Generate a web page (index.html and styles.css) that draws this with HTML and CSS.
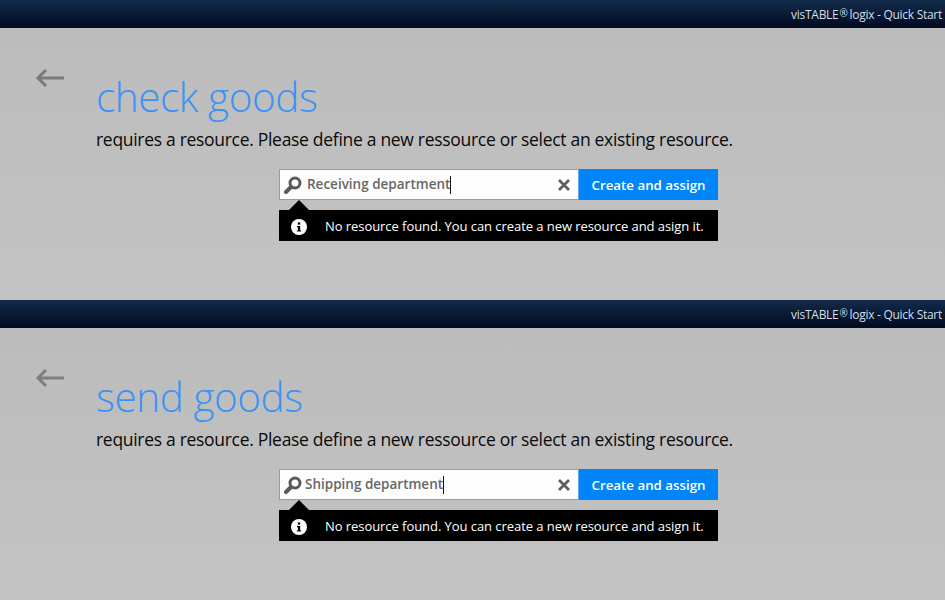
FILE: index.html
```html
<!DOCTYPE html>
<html lang="en">
<head>
<meta charset="utf-8">
<title>visTABLE logix - Quick Start</title>
<link rel="stylesheet" href="styles.css">
</head>
<body>
<section class="panel">
  <header class="bar"><span class="brand">visTABLE<span class="reg">®</span>logix - Quick Start</span></header>
  <div class="content">
    <svg class="back" width="30" height="20" viewBox="0 0 30 20"><path d="M29 10H3M11 2L3 10l8 8" fill="none" stroke="#7a7a7a" stroke-width="3"/></svg>
    <div class="main">
      <h1 class="title">check goods</h1>
      <p class="sub">requires a resource. Please define a new ressource or select an existing resource.</p>
      <div class="form">
        <div class="row">
          <div class="field">
            <svg class="lens" width="18" height="18" viewBox="0 0 18 18"><circle cx="11" cy="7" r="5" fill="none" stroke="#5a5a5a" stroke-width="3"/><path d="M7 11l-5 5" stroke="#5a5a5a" stroke-width="4" stroke-linecap="round"/></svg>
            <span class="value recv">Receiving department</span><span class="caret"></span>
            <svg class="clear" width="12" height="12" viewBox="0 0 12 12"><path d="M1 1l10 10M11 1L1 11" stroke="#5f5f5f" stroke-width="2.8"/></svg>
          </div>
          <div class="btn">Create and assign</div>
        </div>
        <div class="tip">
          <svg class="info" width="16" height="16" viewBox="0 0 16 16"><circle cx="8" cy="8" r="8" fill="#fff"/><rect x="6.8" y="3.4" width="2.4" height="2.2" fill="#000"/><path d="M6 7h3.2v4.4H10.2V12.6H5.8V11.4H6.9V8.2H6z" fill="#000"/></svg>
          <span class="msg">No resource found. You can create a new resource and asign it.</span>
        </div>
      </div>
    </div>
  </div>
</section>
<section class="panel">
  <header class="bar"><span class="brand">visTABLE<span class="reg">®</span>logix - Quick Start</span></header>
  <div class="content">
    <svg class="back" width="30" height="20" viewBox="0 0 30 20"><path d="M29 10H3M11 2L3 10l8 8" fill="none" stroke="#7f7f7f" stroke-width="3"/></svg>
    <div class="main">
      <h1 class="title">send goods</h1>
      <p class="sub">requires a resource. Please define a new ressource or select an existing resource.</p>
      <div class="form">
        <div class="row">
          <div class="field">
            <svg class="lens" width="18" height="18" viewBox="0 0 18 18"><circle cx="11" cy="7" r="5" fill="none" stroke="#5a5a5a" stroke-width="3"/><path d="M7 11l-5 5" stroke="#5a5a5a" stroke-width="4" stroke-linecap="round"/></svg>
            <span class="value ship">Shipping department</span><span class="caret"></span>
            <svg class="clear" width="12" height="12" viewBox="0 0 12 12"><path d="M1 1l10 10M11 1L1 11" stroke="#5f5f5f" stroke-width="2.8"/></svg>
          </div>
          <div class="btn">Create and assign</div>
        </div>
        <div class="tip">
          <svg class="info" width="16" height="16" viewBox="0 0 16 16"><circle cx="8" cy="8" r="8" fill="#fff"/><rect x="6.8" y="3.4" width="2.4" height="2.2" fill="#000"/><path d="M6 7h3.2v4.4H10.2V12.6H5.8V11.4H6.9V8.2H6z" fill="#000"/></svg>
          <span class="msg">No resource found. You can create a new resource and asign it.</span>
        </div>
      </div>
    </div>
  </div>
</section>
</body>
</html>
```
FILE: styles.css
```css
* { box-sizing: border-box; }
html, body { margin: 0; padding: 0; height: 600px; overflow: hidden; }
body { font-family: "Open Sans", "Noto Sans", sans-serif; background: #c0c0c0; }
.panel { height: 300px; display: flex; flex-direction: column; background: linear-gradient(#bbbbbb, #c3c3c3); }
.bar { height: 28px; flex: none; display: flex; align-items: center; justify-content: flex-end; padding-right: 3px; background: linear-gradient(#132b4a, #010a20); }
.brand { color: #d4dfe8; font-size: 12px; letter-spacing: -0.28px; }
.reg { font-size: 10px; margin: 0 2px 0 1px; position: relative; top: -2px; }
.content { flex: 1; display: flex; padding-top: 40px; padding-left: 35px; }
.back { flex: none; width: 30px; height: 20px; margin-right: 31px; }
.main { flex: 1; padding-top: 3px; }
.title { margin: 0; font-weight: 300; font-size: 40.5px; line-height: 52px; color: #3a93f5; letter-spacing: -0.45px; }
.sub { margin: 3px 0 0; font-size: 17.5px; line-height: 26px; color: #0a0a0a; letter-spacing: -0.3px; white-space: nowrap; }
.form { width: 439px; margin: 17px 0 0 183px; }
.row { display: flex; height: 31px; }
.field { flex: 1; display: flex; align-items: center; background: #fdfdfd; border: 1px solid #66a6ea; padding-left: 4px; }
.lens { flex: none; margin-right: 5px; }
.value { font-size: 13.5px; font-weight: 600; color: #666666; white-space: nowrap; position: relative; top: -1px; }
.value.recv { margin-left: 0; }
.value.ship { margin-left: -2px; }
.caret { width: 1px; height: 18px; background: #111111; flex: none; }
.clear { flex: none; margin-left: auto; margin-right: 8px; }
.btn { flex: none; width: 139px; background: #0085f9; color: #ffffff; font-size: 13.3px; font-weight: 600; display: flex; align-items: center; justify-content: center; }
.tip { margin-top: 10px; height: 31px; background: #000000; color: #ffffff; display: flex; align-items: center; padding: 2px 0 0 12px; position: relative; }
.tip::before { content: ""; position: absolute; left: 10px; top: -10px; width: 0; height: 0; border-left: 10px solid transparent; border-right: 10px solid transparent; border-bottom: 10px solid #000000; }
.info { flex: none; }
.msg { margin: 0 0 2px 18px; font-size: 13px; letter-spacing: -0.06px; white-space: nowrap; }
```
